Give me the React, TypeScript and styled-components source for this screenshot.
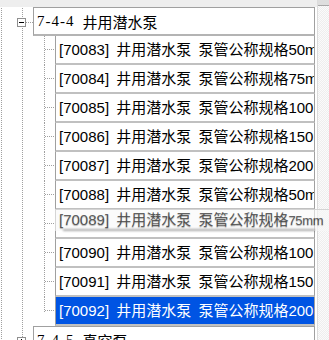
import React from "react";
import styled, { createGlobalStyle, css } from "styled-components";

const Global = createGlobalStyle`
  html, body { margin: 0; padding: 0; background: #fff; overflow: hidden; }
  #root { width: 329px; height: 340px; }
`;

const dotsV = "linear-gradient(to bottom, #a0a0a0 50%, transparent 50%)";
const dotsH = "linear-gradient(to right, #a0a0a0 50%, transparent 50%)";

const Window = styled.div`
  display: flex;
  width: 329px;
  height: 340px;
  overflow: hidden;
  background: #fff;
  font-family: "Liberation Sans", "Noto Sans CJK SC", sans-serif;
  font-size: 15px;
  color: #000;
`;

const TreePane = styled.div`
  position: relative;
  width: 317px;
  flex: none;
  display: flex;
  flex-direction: column;
  background-image: ${dotsV}, ${dotsV};
  background-size: 1px 2px, 1px 2px;
  background-position: 1px 0, 22px 0;
  background-repeat: repeat-y;
`;

const TopStrip = styled.div`
  height: 7px;
  flex: none;
  background: #eeeeee;
`;

const GroupHeader = styled.div`
  display: flex;
  height: 29px;
  flex: none;
`;

const Gutter = styled.div`
  width: 33px;
  flex: none;
  box-sizing: border-box;
  padding-left: 17px;
  padding-top: 1px;
  display: flex;
  align-items: center;
`;

const Expander = styled.div<{ $open: boolean }>`
  position: relative;
  width: 9px;
  height: 9px;
  box-sizing: border-box;
  flex: none;
  border: 1px solid #8f8f8f;
  background: #fff;
  &::before {
    content: "";
    position: absolute;
    left: 1px;
    top: 3px;
    width: 5px;
    height: 1px;
    background: #000;
  }
  ${(p) =>
    !p.$open &&
    css`
      &::after {
        content: "";
        position: absolute;
        left: 3px;
        top: 1px;
        width: 1px;
        height: 5px;
        background: #000;
      }
    `}
`;

const Stub = styled.div`
  flex: 1;
  height: 1px;
  background-image: ${dotsH};
  background-size: 2px 1px;
`;

const HeaderBox = styled.div`
  flex: 1;
  margin-right: 2px;
  box-sizing: border-box;
  border: 1px solid #a0a0a0;
  border-bottom: 2px solid #b4b4b4;
  background: #fff;
  display: flex;
  align-items: center;
  padding-left: 3px;
  white-space: nowrap;
  overflow: hidden;
`;

const HeaderCode = styled.span`
  font-family: "Liberation Serif", "Noto Sans CJK SC", serif;
  letter-spacing: 1px;
`;

const HeaderName = styled.span`
  margin-left: 8px;
  font-family: "Noto Sans CJK SC", sans-serif;
`;

const ChildRow = styled.div`
  position: relative;
  display: flex;
  height: 29px;
  flex: none;
`;

const Indent = styled.div`
  width: 44px;
  flex: none;
`;

const Connector = styled.div<{ $last: boolean }>`
  position: relative;
  width: 11px;
  flex: none;
  &::before {
    content: "";
    position: absolute;
    left: 0;
    top: 0;
    width: 1px;
    height: ${(p) => (p.$last ? "50%" : "100%")};
    background-image: ${dotsV};
    background-size: 1px 2px;
  }
  &::after {
    content: "";
    position: absolute;
    left: 1px;
    right: 0;
    top: 13px;
    height: 1px;
    background-image: ${dotsH};
    background-size: 2px 1px;
  }
`;

const RowBox = styled.div<{ $selected: boolean }>`
  flex: 1;
  min-width: 0;
  margin-right: 2px;
  box-sizing: border-box;
  border-left: 1px solid #a0a0a0;
  border-right: 1px solid #a0a0a0;
  border-bottom: 2px solid #c0c0c0;
  background: ${(p) => (p.$selected ? "#0054e3" : "#fff")};
  color: ${(p) => (p.$selected ? "#fff" : "#000")};
  padding-left: 3px;
  line-height: 27px;
  white-space: nowrap;
  overflow: hidden;
  word-spacing: 3px;
`;

const Ghost = styled.div`
  position: absolute;
  z-index: 5;
  left: 55px;
  top: -1px;
  width: 274px;
  height: 22px;
  box-sizing: border-box;
  padding-left: 4px;
  line-height: 19px;
  white-space: nowrap;
  word-spacing: 3px;
  color: rgba(0, 0, 0, 0.62);
  text-shadow: 0 1px 1px rgba(0, 0, 0, 0.3);
  background: rgba(248, 248, 248, 0.6);
  border-top: 1px solid #d4d4d4;
  &::after {
    content: "";
    position: absolute;
    left: 8px;
    right: 14px;
    bottom: 0;
    height: 2px;
    background: rgba(0, 0, 0, 0.32);
    filter: blur(1px);
  }
`;

const GhostUnit = styled.span`
  font-size: 13px;
  letter-spacing: -0.3px;
`;

const Scrollbar = styled.div`
  flex: 1;
  display: flex;
  flex-direction: column;
  border-left: 1px solid #dcdcdc;
  background: repeating-conic-gradient(#eeeeee 0 25%, #fbfbfb 0 50%) 0 0 / 2px 2px;
`;

const ScrollCap = styled.div`
  height: 5px;
  flex: none;
  background: #dedede;
  border-bottom: 1px solid #a8a8a8;
`;

const items = [
  { code: "70083", spec: "50mm" },
  { code: "70084", spec: "75mm" },
  { code: "70085", spec: "100mm" },
  { code: "70086", spec: "150mm" },
  { code: "70087", spec: "200mm" },
  { code: "70088", spec: "50mm" },
  { code: "70089", spec: "75mm", dragging: true },
  { code: "70090", spec: "100mm" },
  { code: "70091", spec: "150mm" },
  { code: "70092", spec: "200mm", selected: true },
];

export default function App() {
  return (
    <>
      <Global />
      <Window>
        <TreePane>
          <TopStrip />
          <GroupHeader>
            <Gutter>
              <Expander $open />
              <Stub />
            </Gutter>
            <HeaderBox>
              <HeaderCode>7-4-4</HeaderCode>
              <HeaderName>井用潜水泵</HeaderName>
            </HeaderBox>
          </GroupHeader>
          {items.map((it, i) => (
            <ChildRow key={it.code}>
              <Indent />
              <Connector $last={i === items.length - 1} />
              <RowBox $selected={!!it.selected}>
                {it.dragging ? "" : `[${it.code}] 井用潜水泵 泵管公称规格${it.spec}`}
              </RowBox>
              {it.dragging && (
                <Ghost>
                  [{it.code}] 井用潜水泵 泵管公称规格<GhostUnit>{it.spec}</GhostUnit>
                </Ghost>
              )}
            </ChildRow>
          ))}
          <GroupHeader>
            <Gutter>
              <Expander $open={false} />
              <Stub />
            </Gutter>
            <HeaderBox>
              <HeaderCode>7-4-5</HeaderCode>
              <HeaderName>真空泵</HeaderName>
            </HeaderBox>
          </GroupHeader>
        </TreePane>
        <Scrollbar>
          <ScrollCap />
        </Scrollbar>
      </Window>
    </>
  );
}
